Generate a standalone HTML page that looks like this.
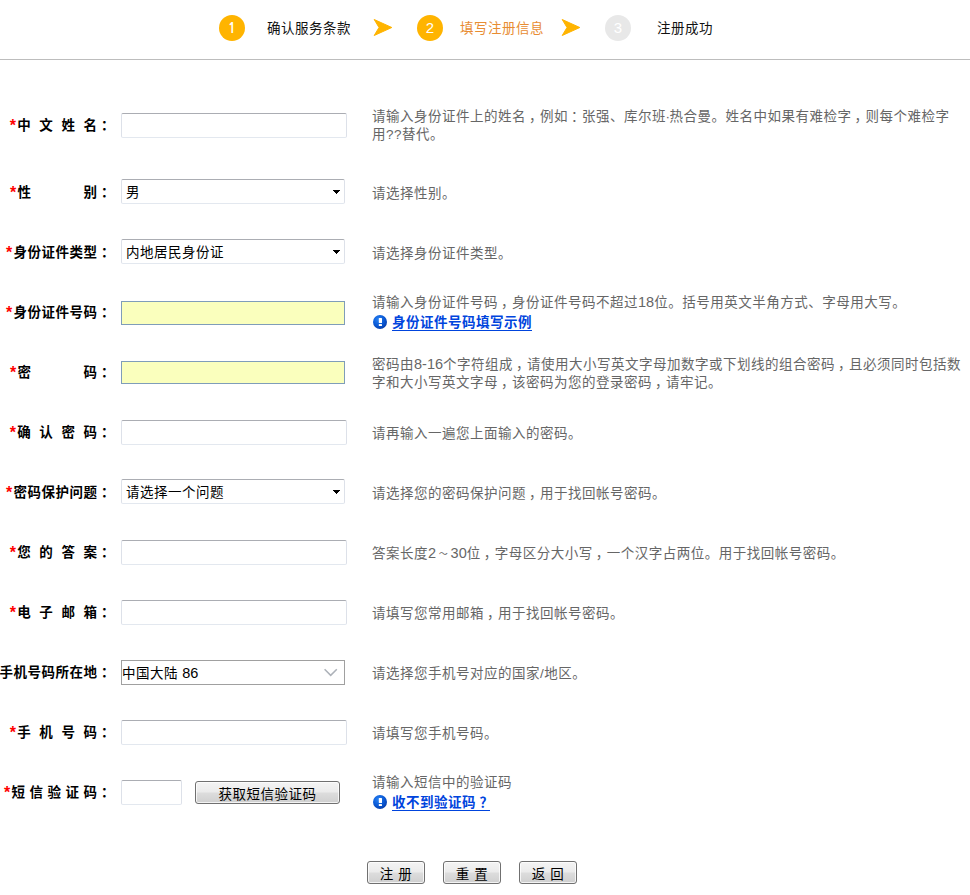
<!DOCTYPE html>
<html lang="zh-CN">
<head>
<meta charset="utf-8">
<title>填写注册信息</title>
<style>
html,body{margin:0;padding:0;background:#fff;}
body{width:970px;height:895px;position:relative;overflow:hidden;font-family:"Liberation Sans","Noto Sans CJK SC",sans-serif;font-size:14px;color:#000;}
.abs{position:absolute;}
/* steps */
.circle{position:absolute;top:15px;width:26px;height:26px;border-radius:50%;background:#ffb400;color:#fff;text-align:center;font:15px/26px "Liberation Sans",sans-serif;}
.circle.off{background:#e8e8e8;color:#fff;}
.step{position:absolute;top:19px;height:20px;line-height:20px;font-size:13.5px;letter-spacing:.5px;white-space:nowrap;color:#111;}
.step.on{color:#e88c32;}
.arrow{position:absolute;top:17px;width:24px;height:22px;}
.hr{position:absolute;left:0;top:59px;width:970px;height:1px;background:#bdbdbd;}
/* labels */
.lb{position:absolute;right:858.5px;height:20px;line-height:20px;font-size:13.5px;letter-spacing:.5px;font-weight:bold;white-space:nowrap;text-align:right;color:#000;}
.lb i{font-style:normal;color:#ff0000;font-weight:bold;font-size:16px;letter-spacing:0;display:inline-block;width:7px;text-align:center;position:relative;top:1px;left:-0.8px;}
.lb s{display:inline-block;text-decoration:none;}
.c{position:relative;left:3.5px;}
.ht .c{left:3px;}
.t{display:inline-block;width:14.5px;text-align:center;font-size:9px;letter-spacing:0;line-height:0;vertical-align:1.5px;}
.n{font-size:14.5px;letter-spacing:0;line-height:0;}
.s2{width:8.1px;}
.s1{width:4px;}
.sw{width:52px;}
/* inputs */
.in{position:absolute;left:121px;width:226px;height:25px;box-sizing:border-box;background:#fff;border:1px solid #dde1e9;border-top-color:#abadb3;border-bottom-color:#e3e8ef;border-radius:2px;}
.sel{position:absolute;left:121px;width:224px;height:25px;box-sizing:border-box;background:#fff;border:1px solid #dde1e9;border-top-color:#abadb3;border-bottom-color:#e3e8ef;border-radius:2px;font-size:13.5px;letter-spacing:.5px;line-height:25px;padding-left:4px;white-space:nowrap;}
.sel:after{content:"";position:absolute;left:211px;top:10px;width:7px;height:4px;background:linear-gradient(#000,#000) 0 0/7px 1px no-repeat,linear-gradient(#000,#000) 1px 1px/5px 1px no-repeat,linear-gradient(#000,#000) 2px 2px/3px 1px no-repeat,linear-gradient(#000,#000) 3px 3px/1px 1px no-repeat;}
.yl{position:absolute;left:121px;width:224px;box-sizing:border-box;background:#faffbd;border:1px solid #7f9db9;}
.csel{position:absolute;left:121px;top:660px;width:224px;height:25px;box-sizing:border-box;background:#fff;border:1px solid #a0a0a0;font-size:13.5px;letter-spacing:.5px;line-height:25px;padding-left:0px;white-space:nowrap;}
/* hints */
.ht{position:absolute;left:372px;font-size:13.5px;letter-spacing:0.5px;line-height:18px;color:#666;white-space:nowrap;}
.lk{position:absolute;left:392px;font-size:13.5px;letter-spacing:.5px;line-height:18px;font-weight:bold;color:#0044dd;white-space:nowrap;border-bottom:1px solid #0044dd;height:16px;}
.ic{position:absolute;left:373px;width:14px;height:14px;}
/* buttons */
.btn{position:absolute;box-sizing:border-box;height:23px;border:1px solid #707070;border-radius:3px;background:linear-gradient(#f4f4f4 0%,#ebebeb 48%,#dddddd 52%,#cfcfcf 100%);box-shadow:inset 0 0 0 1px rgba(255,255,255,.75);font-size:13.5px;letter-spacing:.5px;line-height:25px;text-align:center;color:#000;white-space:nowrap;}
</style>
</head>
<body>
<!-- steps -->
<div class="circle" style="left:219px;font-family:NanumGothic,'Liberation Sans',sans-serif;font-weight:bold;font-size:14px;">1</div>
<div class="step" style="left:267px;">确认服务条款</div>
<svg class="arrow" style="left:371px;" viewBox="0 0 24 22"><polygon points="3.2,2.5 20.8,10.5 3.2,18.5 8,10.5" fill="#ffb400" stroke="#ffb400" stroke-width="1" stroke-linejoin="round"/></svg>
<div class="circle" style="left:417px;">2</div>
<div class="step on" style="left:460px;">填写注册信息</div>
<svg class="arrow" style="left:559px;" viewBox="0 0 24 22"><polygon points="3.2,2.5 20.8,10.5 3.2,18.5 8,10.5" fill="#ffb400" stroke="#ffb400" stroke-width="1" stroke-linejoin="round"/></svg>
<div class="circle off" style="left:605px;">3</div>
<div class="step" style="left:657px;">注册成功</div>
<div class="hr"></div>

<!-- row 1 -->
<div class="lb" style="top:115px;"><i>*</i>中<s class="s2"></s>文<s class="s2"></s>姓<s class="s2"></s>名<span class="c">：</span></div>
<div class="in" style="top:113px;"></div>
<div class="ht" style="top:108px;">请输入身份证件上的姓名<span class="c">，</span>例如<span class="c">：</span>张强、库尔班<span style="letter-spacing:-0.5px;margin-left:-0.5px">·</span>热合曼。姓名中如果有难检字<span class="c">，</span>则每个难检字<br>用??替代。</div>

<!-- row 2 -->
<div class="lb" style="top:182px;"><i>*</i>性<s class="sw"></s>别<span class="c">：</span></div>
<div class="sel" style="top:179px;">男</div>
<div class="ht" style="top:185px;">请选择性别。</div>

<!-- row 3 -->
<div class="lb" style="top:242px;"><i>*</i>身份证件类型<span class="c">：</span></div>
<div class="sel" style="top:239px;">内地居民身份证</div>
<div class="ht" style="top:245px;">请选择身份证件类型。</div>

<!-- row 4 -->
<div class="lb" style="top:302px;"><i>*</i>身份证件号码<span class="c">：</span></div>
<div class="yl" style="top:301px;height:24px;"></div>
<div class="ht" style="top:294px;">请输入身份证件号码<span class="c">，</span>身份证件号码不超过<span class="n">18</span>位。括号用英文半角方式、字母用大写。</div>
<svg class="ic" style="top:315px;" viewBox="0 0 14 14"><defs><radialGradient id="g1" cx="38%" cy="32%" r="72%"><stop offset="0" stop-color="#2a82f2"/><stop offset="0.55" stop-color="#0b5cd8"/><stop offset="0.85" stop-color="#0748bc"/><stop offset="1" stop-color="#063aa6"/></radialGradient></defs><circle cx="7" cy="7" r="7" fill="url(#g1)"/><rect x="5.8" y="2.9" width="3.2" height="5.1" rx="0.5" fill="#fff"/><rect x="5.8" y="9.1" width="3.2" height="2" rx="0.5" fill="#fff"/></svg>
<div class="lk" style="top:314px;">身份证件号码填写示例</div>

<!-- row 5 -->
<div class="lb" style="top:362px;"><i>*</i>密<s class="sw"></s>码<span class="c">：</span></div>
<div class="yl" style="top:361px;height:23px;"></div>
<div class="ht" style="top:356px;">密码由<span class="n">8-16</span>个字符组成<span class="c">，</span>请使用大小写英文字母加数字或下划线的组合密码<span class="c">，</span>且必须同时包括数<br>字和大小写英文字母<span class="c">，</span>该密码为您的登录密码<span class="c">，</span>请牢记。</div>

<!-- row 6 -->
<div class="lb" style="top:422px;"><i>*</i>确<s class="s2"></s>认<s class="s2"></s>密<s class="s2"></s>码<span class="c">：</span></div>
<div class="in" style="top:420px;"></div>
<div class="ht" style="top:425px;">请再输入一遍您上面输入的密码。</div>

<!-- row 7 -->
<div class="lb" style="top:482px;"><i>*</i>密码保护问题<span class="c">：</span></div>
<div class="sel" style="top:479px;">请选择一个问题</div>
<div class="ht" style="top:485px;">请选择您的密码保护问题<span class="c">，</span>用于找回帐号密码。</div>

<!-- row 8 -->
<div class="lb" style="top:542px;"><i>*</i>您<s class="s2"></s>的<s class="s2"></s>答<s class="s2"></s>案<span class="c">：</span></div>
<div class="in" style="top:540px;"></div>
<div class="ht" style="top:545px;">答案长度<span class="n">2</span><span class="t">～</span><span class="n">30</span>位<span class="c">，</span>字母区分大小写<span class="c">，</span>一个汉字占两位。用于找回帐号密码。</div>

<!-- row 9 -->
<div class="lb" style="top:602px;"><i>*</i>电<s class="s2"></s>子<s class="s2"></s>邮<s class="s2"></s>箱<span class="c">：</span></div>
<div class="in" style="top:600px;"></div>
<div class="ht" style="top:605px;">请填写您常用邮箱<span class="c">，</span>用于找回帐号密码。</div>

<!-- row 10 -->
<div class="lb" style="top:662px;"><i>*</i>手机号码所在地<span class="c">：</span></div>
<div class="csel">中国大陆 <span class="n">86</span><svg class="abs" style="left:201px;top:7.4px;" width="16" height="10" viewBox="0 0 16 10"><polyline points="1.6,1.2 7.7,7.4 13.8,1.2" fill="none" stroke="#adb2b9" stroke-width="1.5"/></svg></div>
<div class="ht" style="top:665px;">请选择您手机号对应的国家/地区。</div>

<!-- row 11 -->
<div class="lb" style="top:722px;"><i>*</i>手<s class="s2"></s>机<s class="s2"></s>号<s class="s2"></s>码<span class="c">：</span></div>
<div class="in" style="top:720px;"></div>
<div class="ht" style="top:725px;">请填写您手机号码。</div>

<!-- row 12 -->
<div class="lb" style="top:782px;"><i>*</i>短<s class="s1"></s>信<s class="s1"></s>验<s class="s1"></s>证<s class="s1"></s>码<span class="c">：</span></div>
<div class="in" style="top:780px;width:61px;"></div>
<div class="btn" style="left:195px;top:781px;width:145px;">获取短信验证码</div>
<div class="ht" style="top:774px;">请输入短信中的验证码</div>
<svg class="ic" style="top:795px;" viewBox="0 0 14 14"><circle cx="7" cy="7" r="7" fill="url(#g1)"/><rect x="5.8" y="2.9" width="3.2" height="5.1" rx="0.5" fill="#fff"/><rect x="5.8" y="9.1" width="3.2" height="2" rx="0.5" fill="#fff"/></svg>
<div class="lk" style="top:794px;">收不到验证码<span class="c">？</span></div>

<!-- bottom buttons -->
<div class="btn" style="left:367px;top:861px;width:58px;">注<s style="display:inline-block;width:4.5px"></s>册</div>
<div class="btn" style="left:443px;top:861px;width:58px;">重<s style="display:inline-block;width:4.5px"></s>置</div>
<div class="btn" style="left:519px;top:861px;width:58px;">返<s style="display:inline-block;width:4.5px"></s>回</div>
</body>
</html>
